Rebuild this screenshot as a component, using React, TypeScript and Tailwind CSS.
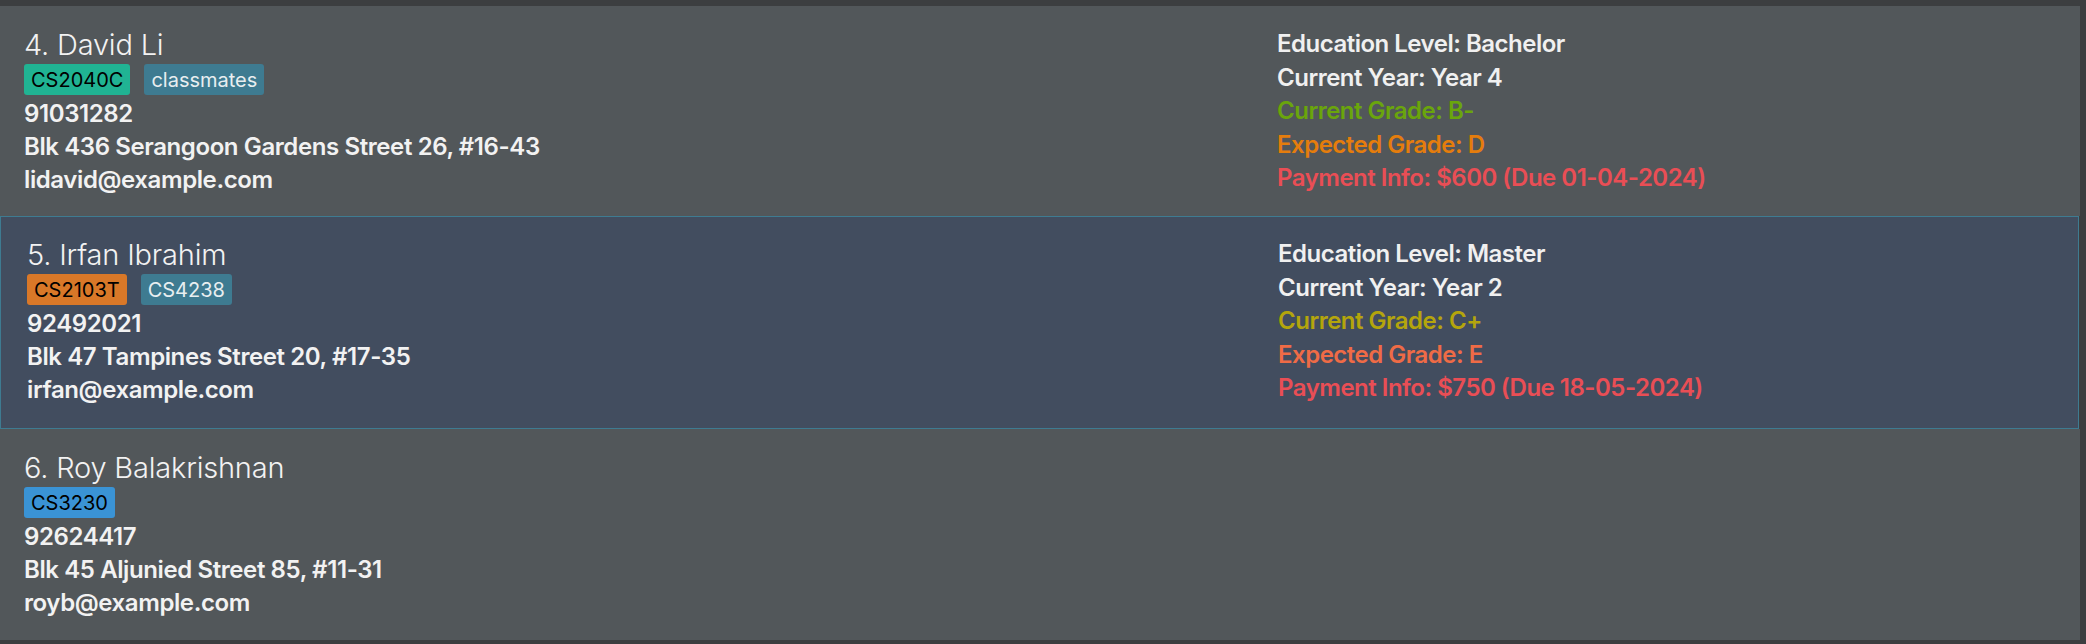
type Tag = { label: string; bg: string; fg: string };

type Detail = { text: string; color: string };

type Person = {
	index: number;
	name: string;
	tags: Tag[];
	phone: string;
	address: string;
	email: string;
	details?: Detail[];
};

const people: Person[] = [
	{
		index: 4,
		name: "David Li",
		tags: [
			{ label: "CS2040C", bg: "bg-[#20b393]", fg: "text-black" },
			{ label: "classmates", bg: "bg-[#3e7b91]", fg: "text-[#e8eef0]" },
		],
		phone: "91031282",
		address: "Blk 436 Serangoon Gardens Street 26, #16-43",
		email: "lidavid@example.com",
		details: [
			{ text: "Education Level: Bachelor", color: "text-[#f0f0f0]" },
			{ text: "Current Year: Year 4", color: "text-[#f0f0f0]" },
			{ text: "Current Grade: B-", color: "text-[#6aa50c]" },
			{ text: "Expected Grade: D", color: "text-[#e57d0c]" },
			{ text: "Payment Info: $600 (Due 01-04-2024)", color: "text-[#e94e55]" },
		],
	},
	{
		index: 5,
		name: "Irfan Ibrahim",
		tags: [
			{ label: "CS2103T", bg: "bg-[#d97828]", fg: "text-black" },
			{ label: "CS4238", bg: "bg-[#3e7b91]", fg: "text-[#e8eef0]" },
		],
		phone: "92492021",
		address: "Blk 47 Tampines Street 20, #17-35",
		email: "irfan@example.com",
		details: [
			{ text: "Education Level: Master", color: "text-[#f0f0f0]" },
			{ text: "Current Year: Year 2", color: "text-[#f0f0f0]" },
			{ text: "Current Grade: C+", color: "text-[#b4a50c]" },
			{ text: "Expected Grade: E", color: "text-[#ef6b46]" },
			{ text: "Payment Info: $750 (Due 18-05-2024)", color: "text-[#e94e55]" },
		],
	},
	{
		index: 6,
		name: "Roy Balakrishnan",
		tags: [{ label: "CS3230", bg: "bg-[#3a93d5]", fg: "text-black" }],
		phone: "92624417",
		address: "Blk 45 Aljunied Street 85, #11-31",
		email: "royb@example.com",
	},
];

function PersonCard({ person, selected, height }: { person: Person; selected: boolean; height: string }) {
	return (
		<div
			className={`${height} grid grid-cols-[1277px_1fr] ${
				selected ? "bg-[#424d5f] border border-[#3e7b91] mr-[1px]" : "bg-[#52575a]"
			}`}
		>
			<div className={`flex flex-col ${selected ? "pl-[26px] pt-[22px]" : "pl-[24px] pt-[23px]"}`}>
				<div className="text-[29px] leading-[32px] font-light text-[#f2f2f2] tracking-[-0.2px]">
					{person.index}. {person.name}
				</div>
				<div className="flex gap-[14px] mt-[3px]">
					{person.tags.map((tag) => (
						<span
							key={tag.label}
							className={`h-[31px] px-[7px] rounded-[3px] text-[20px] leading-[33px] ${tag.bg} ${tag.fg}`}
						>
							{tag.label}
						</span>
					))}
				</div>
				<div className="mt-[2px] text-[24px] leading-[33px] font-semibold text-[#f2f2f2] tracking-[-0.4px]">
					<div>{person.phone}</div>
					<div>{person.address}</div>
					<div>{person.email}</div>
				</div>
			</div>
			<div className={`flex flex-col ${selected ? "pt-[20px]" : "pt-[21px]"} text-[24px] leading-[33.6px] font-semibold tracking-[-0.5px]`}>
				{person.details?.map((d) => (
					<div key={d.text} className={d.color}>
						{d.text}
					</div>
				))}
			</div>
		</div>
	);
}

export default function App() {
	return (
		<div className="w-[2086px] h-[644px] bg-[#3c3e40] flex font-['Inter',sans-serif]">
			<div className="w-[2080px] pt-[6px] flex flex-col">
				<PersonCard person={people[0]} selected={false} height="h-[210px]" />
				<PersonCard person={people[1]} selected={true} height="h-[213px]" />
				<PersonCard person={people[2]} selected={false} height="h-[211px]" />
			</div>
		</div>
	);
}
